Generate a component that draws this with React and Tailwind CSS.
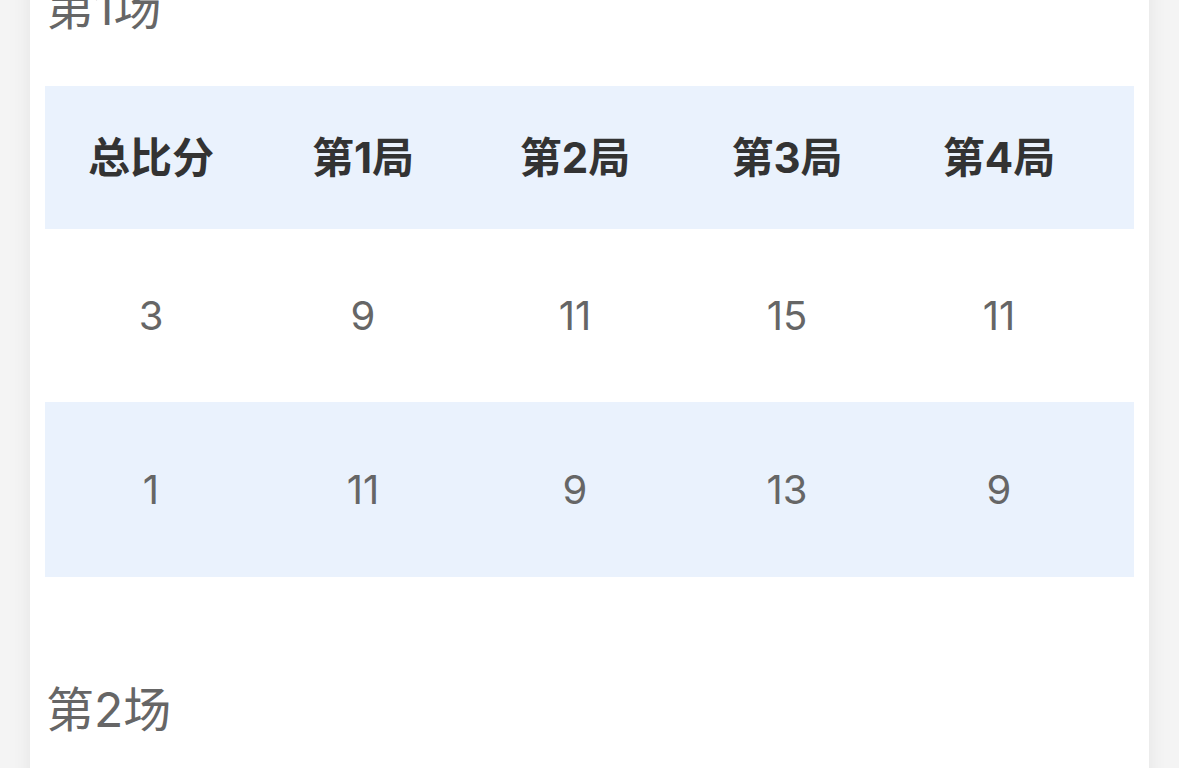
import React from 'react';

const games = [
  {
    title: '第1场',
    rows: [
      ['3', '9', '11', '15', '11'],
      ['1', '11', '9', '13', '9'],
    ],
  },
  {
    title: '第2场',
    rows: [
      ['3', '11', '8', '11', '11'],
      ['0', '7', '11', '9', '6'],
    ],
  },
];

const headers = ['总比分', '第1局', '第2局', '第3局', '第4局'];

const ScoreTable = ({ rows }) => (
  <div className="flex flex-col">
    <div className="h-[143px] bg-[#eaf2fd] flex items-center">
      <div className="grid grid-cols-[repeat(5,212px)]">
        {headers.map((h) => (
          <div key={h} className="text-center text-[42px] font-bold text-[#333333]">
            {h}
          </div>
        ))}
      </div>
    </div>
    {rows.map((row, i) => (
      <div
        key={i}
        className={`flex items-center ${i === 0 ? 'h-[173px] bg-white' : 'h-[175px] bg-[#eaf2fd]'}`}
      >
        <div className="grid grid-cols-[repeat(5,212px)]">
          {row.map((v, j) => (
            <div key={j} className="text-center text-[40px] text-[#666666]">
              {v}
            </div>
          ))}
        </div>
      </div>
    ))}
  </div>
);

export default function App() {
  return (
    <div
      className="min-h-screen bg-[#f4f4f4]"
      style={{ fontFamily: 'Inter, "Noto Sans CJK SC", sans-serif' }}
    >
      <div className="mx-[30px] w-[1119px] bg-white shadow-[0_0_18px_rgba(0,0,0,0.07)] px-[15px] pb-10 -mt-[29px]">
        {games.map((g, idx) => (
          <div key={g.title} className={idx > 0 ? 'mt-[96px]' : ''}>
            <div className="h-[66px] leading-[74px] text-[48px] text-[#666666] pl-[1px]">
              {g.title}
            </div>
            <div className="mt-[49px]">
              <ScoreTable rows={g.rows} />
            </div>
          </div>
        ))}
      </div>
    </div>
  );
}
